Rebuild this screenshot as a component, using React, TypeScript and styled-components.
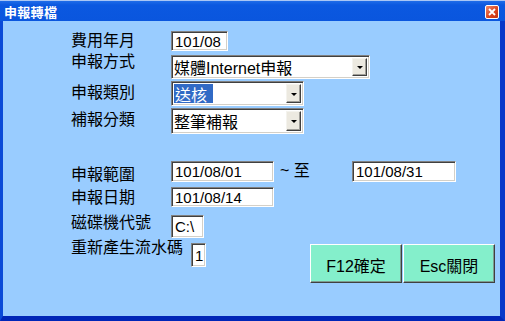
import { createGlobalStyle, styled } from "styled-components";

const GlobalStyle = createGlobalStyle`
  html, body {
    margin: 0;
    padding: 0;
    background: #0a4ad8;
  }
  body {
    font-family: "Liberation Sans", "Noto Sans CJK TC", sans-serif;
    color: #000;
  }
`;

const Window = styled.div`
  width: 505px;
  height: 321px;
  display: flex;
  flex-direction: column;
  background: #0a4ad8;
  overflow: hidden;
`;

const TitleBar = styled.div`
  flex: none;
  height: 21px;
  box-sizing: border-box;
  display: flex;
  align-items: center;
  justify-content: space-between;
  padding: 2px 6px 0 4px;
  border-top: 1px solid #a9c6f5;
  background: linear-gradient(#1f6ce8 0, #0b58e0 4px, #0a56de 100%);
`;

const Title = styled.span`
  font-family: "Noto Sans CJK TC", sans-serif;
  font-size: 13px;
  font-weight: 700;
  line-height: 16px;
  color: #fff;
  letter-spacing: 0.3px;
`;

const CloseBox = styled.div`
  width: 14px;
  height: 14px;
  box-sizing: border-box;
  border: 1px solid #fff;
  border-radius: 2px;
  background: linear-gradient(135deg, #f08a6a, #d9421c 60%, #c23512);
  display: flex;
  align-items: center;
  justify-content: center;
`;

const Client = styled.div`
  flex: 1;
  display: flex;
  flex-direction: column;
  background: #99ccff;
  border-left: 3px solid #0a4ad8;
  border-right: 5px solid #0838c9;
  border-bottom: 5px solid #0026b8;
  padding: 10px 5px 0 68px;
`;

const Row = styled.div<{ $gap: number }>`
  display: flex;
  align-items: flex-start;
  margin-top: ${(p) => p.$gap}px;
`;

const Label = styled.span<{ $w?: number; $dy: number }>`
  flex: none;
  width: ${(p) => p.$w ?? 100}px;
  margin-top: ${(p) => p.$dy}px;
  font-family: "Noto Sans CJK TC", sans-serif;
  font-size: 16px;
  line-height: 18px;
  white-space: nowrap;
`;

const TextBox = styled.input.attrs({ readOnly: true })<{ $w: number; $h: number }>`
  flex: none;
  width: ${(p) => p.$w}px;
  height: ${(p) => p.$h}px;
  box-sizing: border-box;
  margin: 0;
  padding: 0 0 0 3px;
  background: #fff;
  border: 1px solid;
  border-color: #808080 #fff #fff #808080;
  box-shadow: inset 1px 1px 0 #404040, inset -1px -1px 0 #d4d0c8;
  font-family: "Liberation Sans", "Noto Sans CJK TC", sans-serif;
  font-size: 15px;
  color: #000;
  outline: none;
`;

const Select = styled.div<{ $w: number; $h: number }>`
  flex: none;
  display: flex;
  align-items: stretch;
  width: ${(p) => p.$w}px;
  height: ${(p) => p.$h}px;
  box-sizing: border-box;
  padding: 2px;
  background: #fff;
  border: 1px solid;
  border-color: #808080 #fff #fff #808080;
  box-shadow: inset 1px 1px 0 #404040, inset -1px -1px 0 #d4d0c8;
`;

const SelectText = styled.div`
  flex: 1;
  display: flex;
  align-items: center;
  font-family: "Liberation Sans", "Noto Sans CJK TC", sans-serif;
  font-size: 16px;
  white-space: nowrap;
  overflow: hidden;
`;

const Selected = styled.span`
  align-self: stretch;
  display: flex;
  align-items: center;
  background: #316ac5;
  color: #fff;
  padding: 0 6px 0 1px;
`;

const DropButton = styled.div`
  flex: none;
  width: 15px;
  box-sizing: border-box;
  background: #ece9e0;
  border: 1px solid;
  border-color: #f4f3ee #404040 #404040 #f4f3ee;
  box-shadow: inset -1px -1px 0 #a09e98;
  display: flex;
  align-items: center;
  justify-content: center;

  &::after {
    content: "";
    border-left: 3px solid transparent;
    border-right: 3px solid transparent;
    border-top: 3px solid #000;
    margin-top: 1px;
  }
`;

const Sep = styled.span`
  flex: none;
  width: 72px;
  padding-left: 6px;
  margin-top: 1px;
  font-family: "Liberation Sans", "Noto Sans CJK TC", sans-serif;
  font-size: 16px;
  line-height: 18px;
`;

const Actions = styled.div`
  margin-left: auto;
  margin-top: 1px;
  display: flex;
  gap: 1px;
`;

const ActionButton = styled.button`
  width: 92px;
  height: 39px;
  box-sizing: border-box;
  margin: 0;
  padding: 2px 0 0;
  background: #84efcb;
  border: 1px solid;
  border-color: #ffffff #404040 #404040 #ffffff;
  box-shadow: inset -1px -1px 0 #7d9c90;
  font-family: "Liberation Sans", "Noto Sans CJK TC", sans-serif;
  font-size: 16px;
  color: #000;
`;

const CloseIcon = () => (
  <svg width="8" height="8" viewBox="0 0 8 8">
    <path d="M1 1 L7 7 M7 1 L1 7" stroke="#fff" strokeWidth="1.8" />
  </svg>
);

const App = () => {
  return (
    <Window>
      <GlobalStyle />
      <TitleBar>
        <Title>申報轉檔</Title>
        <CloseBox>
          <CloseIcon />
        </CloseBox>
      </TitleBar>
      <Client>
        <Row $gap={0}>
          <Label $dy={-1}>費用年月</Label>
          <TextBox $w={57} $h={20} defaultValue="101/08" />
        </Row>
        <Row $gap={4}>
          <Label $dy={-4}>申報方式</Label>
          <Select $w={199} $h={24}>
            <SelectText>媒體Internet申報</SelectText>
            <DropButton />
          </Select>
        </Row>
        <Row $gap={2}>
          <Label $dy={1}>申報類別</Label>
          <Select $w={133} $h={25}>
            <SelectText>
              <Selected>送核</Selected>
            </SelectText>
            <DropButton />
          </Select>
        </Row>
        <Row $gap={2}>
          <Label $dy={1}>補報分類</Label>
          <Select $w={133} $h={26}>
            <SelectText>整筆補報</SelectText>
            <DropButton />
          </Select>
        </Row>

        <Row $gap={27}>
          <Label $dy={3}>申報範圍</Label>
          <TextBox $w={103} $h={21} defaultValue="101/08/01" />
          <Sep>~ 至</Sep>
          <TextBox $w={104} $h={21} defaultValue="101/08/31" />
        </Row>
        <Row $gap={5}>
          <Label $dy={0}>申報日期</Label>
          <TextBox $w={103} $h={20} defaultValue="101/08/14" />
        </Row>
        <Row $gap={8}>
          <Label $dy={-3}>磁碟機代號</Label>
          <TextBox $w={33} $h={23} defaultValue="C:\" />
        </Row>
        <Row $gap={5}>
          <Label $w={120} $dy={-6}>
            重新產生流水碼
          </Label>
          <TextBox $w={15} $h={24} defaultValue="1" />
          <Actions>
            <ActionButton>F12確定</ActionButton>
            <ActionButton>Esc關閉</ActionButton>
          </Actions>
        </Row>
      </Client>
    </Window>
  );
};

export default App;
